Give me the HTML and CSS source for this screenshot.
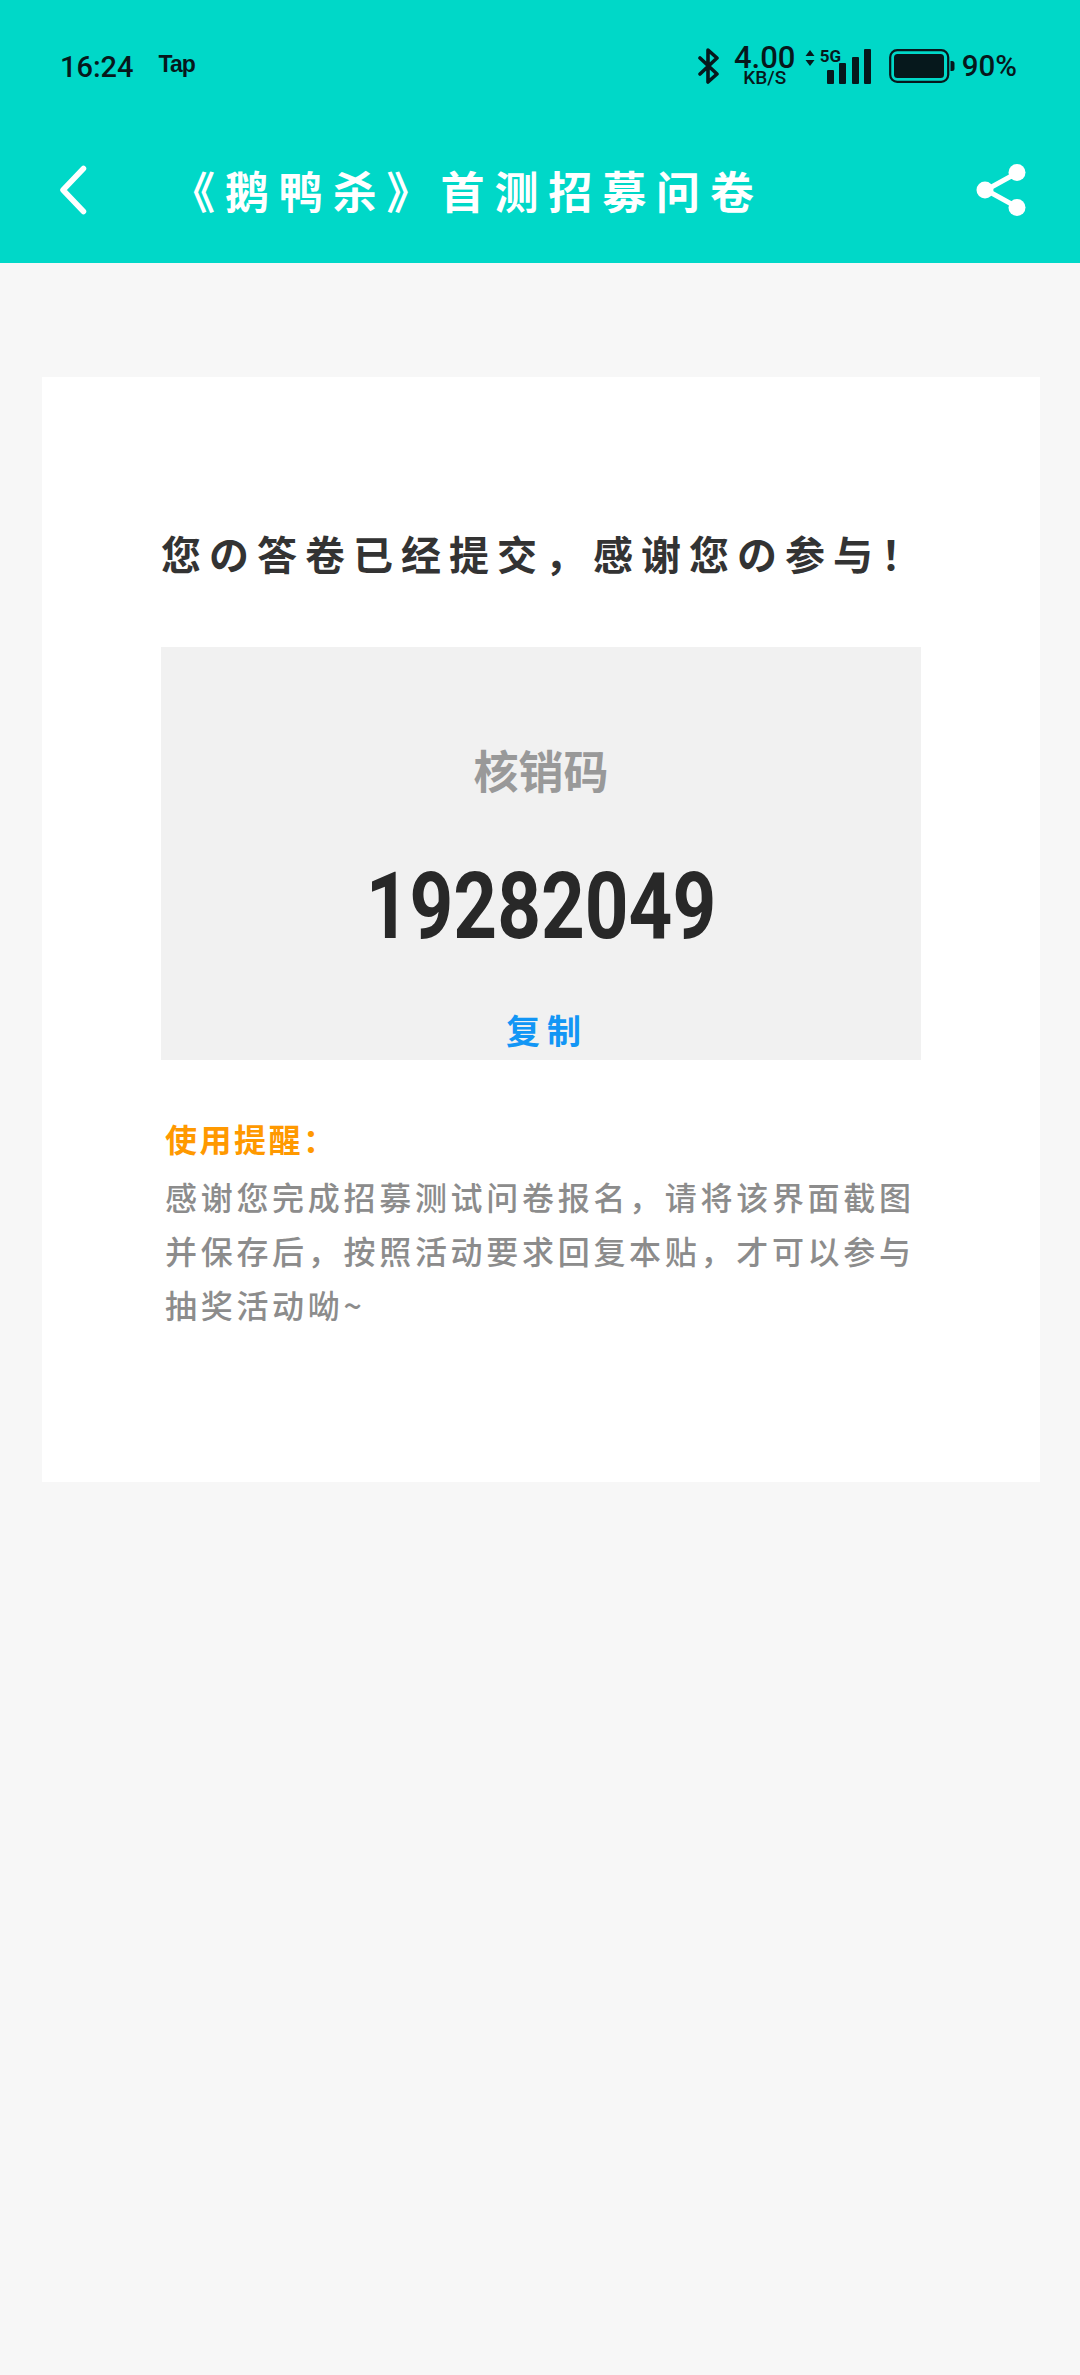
FILE: index.html
```html
<!DOCTYPE html>
<html lang="zh-CN">
<head>
    <meta charset="UTF-8">
    <meta name="viewport" content="width=device-width, initial-scale=1.0">
    <title>《鹅鸭杀》首测招募问卷</title>
    <link rel="stylesheet" href="styles.css">
</head>
<body>
    <header class="top">
        <div class="status">
            <div class="status-left">
                <span class="time">16:24</span>
                <span class="tap">Tap</span>
            </div>
            <div class="status-right">
                <svg class="bt" width="22" height="36" viewBox="0 0 22 36">
                    <path d="M2 10 L19 26 L10 34 V2 L19 10 L2 26" fill="none" stroke="#06181c" stroke-width="3.6" stroke-linecap="round" stroke-linejoin="round"/>
                </svg>
                <div class="speed">
                    <span class="speed-num">4.00</span>
                    <span class="speed-unit">KB/S</span>
                </div>
                <svg class="updown" width="10" height="16" viewBox="0 0 10 16">
                    <path d="M5 0 L9.5 6 H0.5 Z M5 16 L9.5 10 H0.5 Z" fill="#06181c"/>
                </svg>
                <div class="signal">
                    <span class="five-g">5G</span>
                    <svg width="46" height="36" viewBox="0 0 46 36">
                        <rect x="1" y="22" width="7" height="14" rx="1" fill="#06181c"/>
                        <rect x="13" y="15" width="7" height="21" rx="1" fill="#06181c"/>
                        <rect x="26" y="9" width="7" height="27" rx="1" fill="#06181c"/>
                        <rect x="38" y="1" width="7" height="35" rx="1" fill="#06181c"/>
                    </svg>
                </div>
                <svg class="battery" width="66" height="34" viewBox="0 0 66 34">
                    <rect x="1.2" y="1.2" width="58" height="31.6" rx="7" fill="none" stroke="#06181c" stroke-width="2.2"/>
                    <rect x="5" y="5" width="50" height="24" rx="3.5" fill="#06181c"/>
                    <path d="M61.5 12 h1.5 a2.5 2.5 0 0 1 2.5 2.5 v5 a2.5 2.5 0 0 1 -2.5 2.5 h-1.5 Z" fill="#06181c"/>
                </svg>
                <span class="percent">90%</span>
            </div>
        </div>
        <div class="toolbar">
            <svg class="back" width="28" height="50" viewBox="0 0 28 50">
                <path d="M24.5 3.5 L4 25 L24.5 46.5" fill="none" stroke="#fff" stroke-width="5.5" stroke-linecap="round" stroke-linejoin="round"/>
            </svg>
            <h1 class="page-title">《鹅鸭杀》首测招募问卷</h1>
            <svg class="share" width="52" height="54" viewBox="0 0 52 54">
                <path d="M41 10 L10 27 L41 44" fill="none" stroke="#fff" stroke-width="5"/>
                <circle cx="41" cy="9.5" r="8.5" fill="#fff"/>
                <circle cx="9" cy="27" r="8.5" fill="#fff"/>
                <circle cx="41" cy="44.5" r="8.5" fill="#fff"/>
            </svg>
        </div>
    </header>

    <main class="content">
        <section class="card">
            <h2 class="done">您の答卷已经提交，感谢您の参与！</h2>
            <div class="code-box">
                <p class="code-label">核销码</p>
                <p class="code-num">19282049</p>
                <a class="copy">复制</a>
            </div>
            <h3 class="tip-title">使用提醒：</h3>
            <p class="tip-text">感谢您完成招募测试问卷报名，请将该界面截图并保存后，按照活动要求回复本贴，才可以参与抽奖活动呦~</p>
        </section>
    </main>
</body>
</html>
```

FILE: styles.css
```css
body {
    margin: 0;
    min-height: 2375px;
    background-color: #f7f7f7;
    font-family: "Noto Sans CJK SC", "Noto Sans", sans-serif;
}
h1, h2, h3, p {
    margin: 0;
}
.top {
    background-color: #00d8c8;
    height: 263px;
}
.status {
    height: 130px;
    box-sizing: border-box;
    padding: 3px 63px 0 60px;
    display: flex;
    justify-content: space-between;
    align-items: center;
    color: #06181c;
}
.status-left {
    display: flex;
    align-items: center;
    gap: 25px;
}
.time {
    font-family: Roboto, sans-serif;
    font-size: 29px;
    font-weight: 500;
}
.tap {
    font-family: "Liberation Sans", sans-serif;
    font-size: 23px;
    font-weight: bold;
    letter-spacing: -1px;
    margin-top: -5px;
}
.status-right {
    display: flex;
    align-items: center;
    margin-top: -2px;
}
.bt {
    margin-right: 14px;
}
.speed {
    display: flex;
    flex-direction: column;
    align-items: center;
    width: 62px;
    margin-right: 9px;
}
.speed-num {
    font-family: Roboto, sans-serif;
    font-size: 31px;
    font-weight: 500;
    line-height: 24px;
}
.speed-unit {
    font-family: Roboto, sans-serif;
    font-size: 19px;
    font-weight: 500;
    line-height: 15px;
}
.updown {
    margin: -16px 7px 0 0;
}
.signal {
    position: relative;
    line-height: 0;
    margin-left: 4px;
    margin-right: 17px;
}
.five-g {
    position: absolute;
    left: -6px;
    top: 0;
    font-family: Roboto, sans-serif;
    font-size: 17px;
    font-weight: 700;
    line-height: 17px;
}
.percent {
    font-family: Roboto, sans-serif;
    font-size: 29.5px;
    font-weight: 500;
    margin-left: 7px;
}
.toolbar {
    height: 120px;
    padding: 0 52px 0 59px;
    display: flex;
    align-items: center;
}
.page-title {
    flex: 1;
    margin-left: 84px;
    color: #fff;
    font-size: 44px;
    font-weight: 700;
    letter-spacing: 9.9px;
    white-space: nowrap;
}
.content {
    padding: 114px 40px 0 42px;
}
.card {
    background: white;
    height: 1105px;
    box-sizing: border-box;
    padding: 146px 119px 0 119px;
}
.done {
    color: #333;
    font-size: 40px;
    font-weight: 700;
    letter-spacing: 8px;
    line-height: 60px;
    white-space: nowrap;
}
.code-box {
    margin-top: 64px;
    height: 413px;
    box-sizing: border-box;
    padding-top: 93px;
    background-color: #f1f1f1;
    text-align: center;
}
.code-label {
    color: #999;
    font-size: 45px;
    font-weight: 700;
    line-height: 60px;
}
.code-num {
    margin-top: 57px;
    color: #282828;
    font-family: Roboto, sans-serif;
    font-size: 92px;
    font-weight: 700;
    line-height: 100px;
    transform: scaleX(0.83);
}
.copy {
    display: block;
    margin-top: 48px;
    padding-left: 12px;
    color: #1296f5;
    font-size: 34px;
    font-weight: 700;
    letter-spacing: 7px;
    line-height: 50px;
}
.tip-title {
    margin-top: 55px;
    padding-left: 4px;
    color: #ff9900;
    font-size: 32px;
    font-weight: 700;
    letter-spacing: 2.5px;
    line-height: 46px;
}
.tip-text {
    margin-top: 8px;
    padding-left: 4px;
    color: #8c8c8c;
    font-size: 32px;
    font-weight: 500;
    letter-spacing: 3.7px;
    line-height: 54px;
}
```
